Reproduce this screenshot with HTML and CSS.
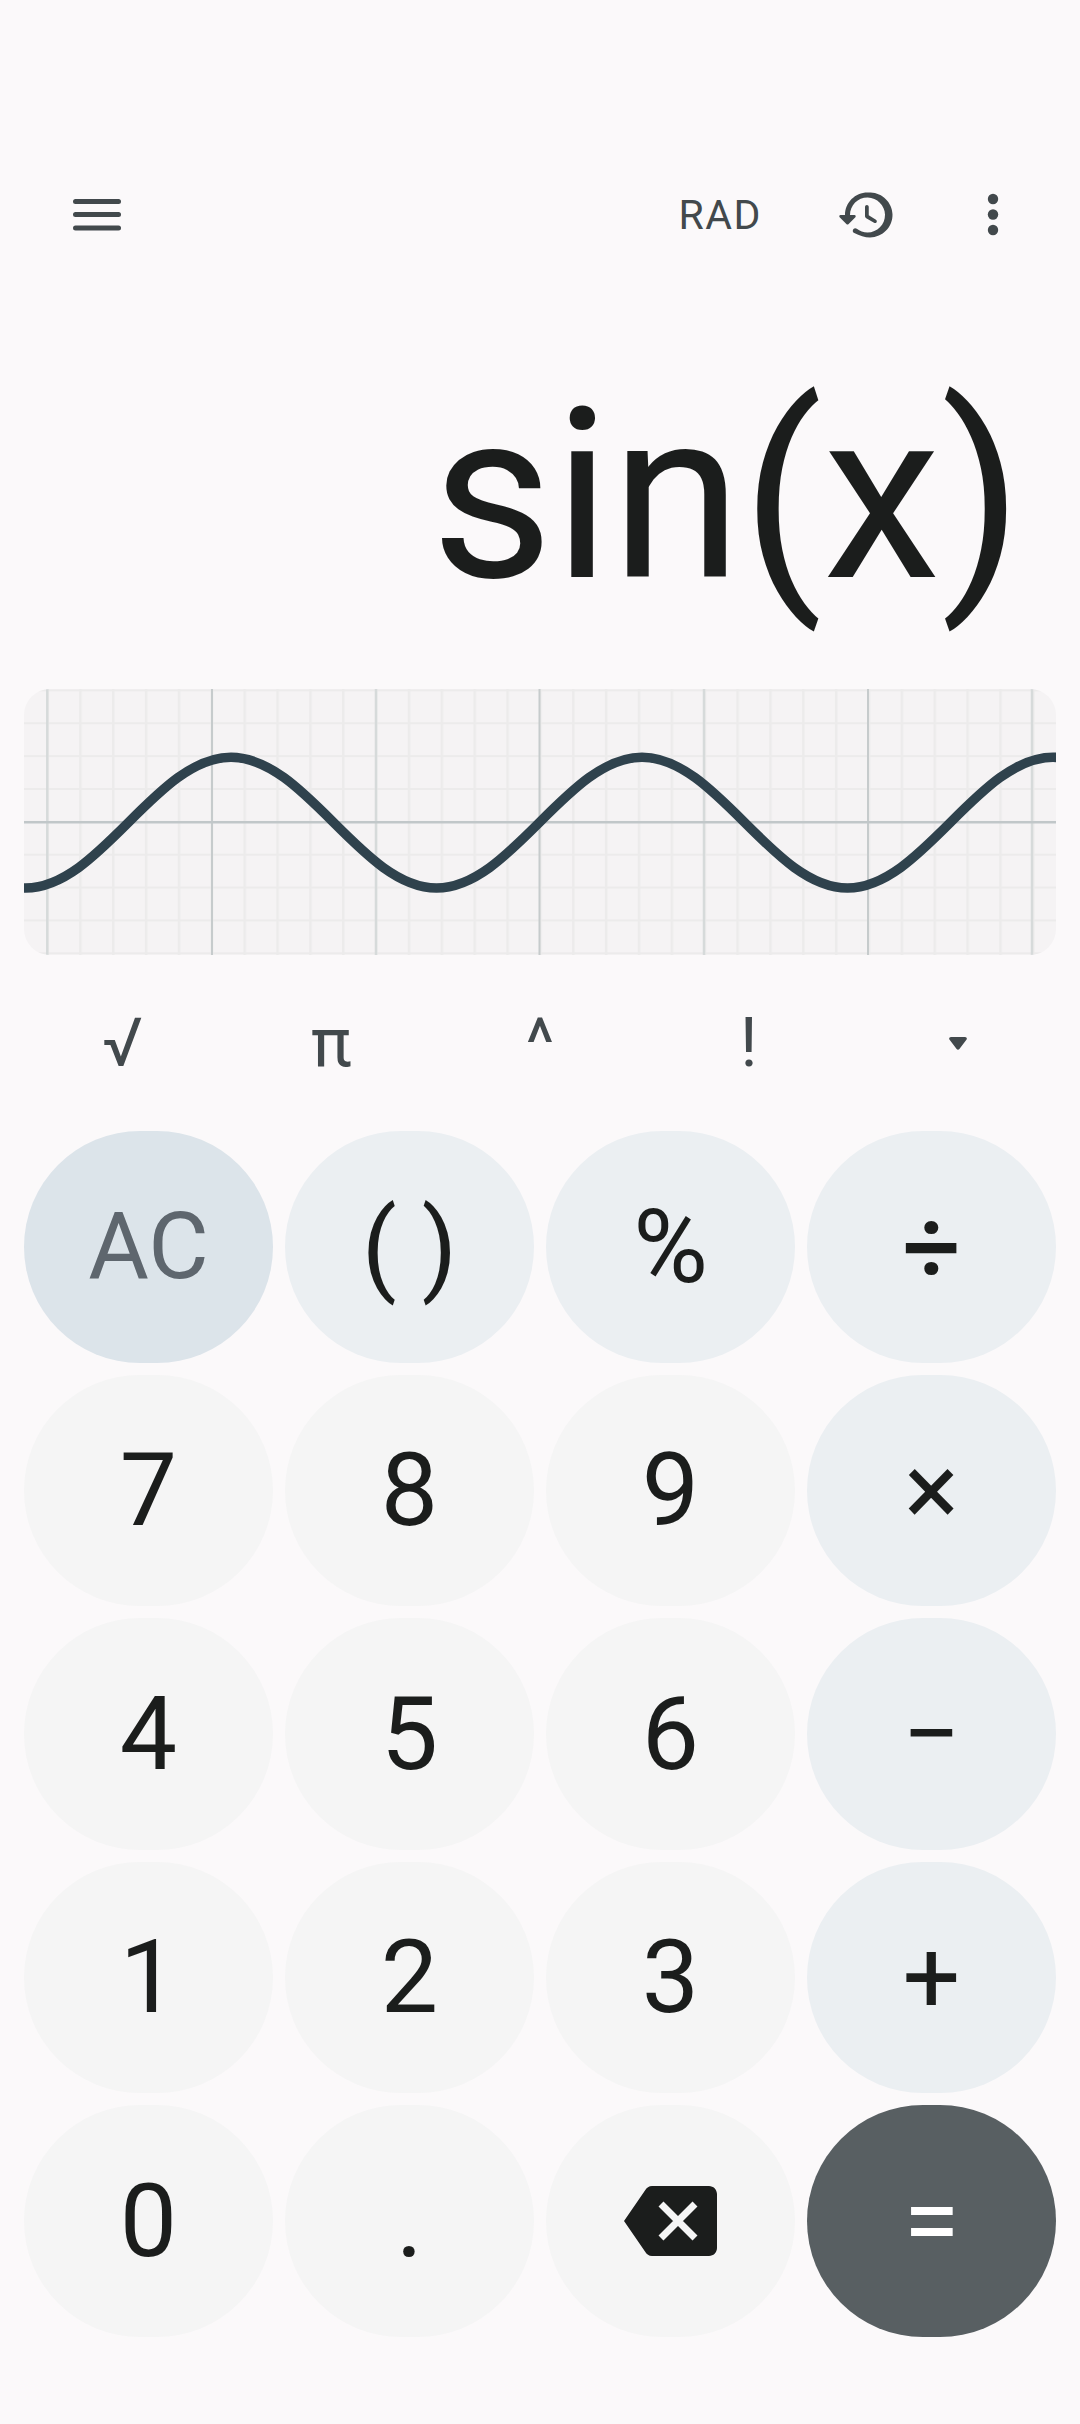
FILE: index.html
```html
<!DOCTYPE html>
<html lang="en">
<head>
  <meta charset="UTF-8" />
  <meta name="viewport" content="width=device-width, initial-scale=1.0" />
  <title>Calculator</title>
  <link rel="stylesheet" href="styles.css">
</head>
<body>
  <header class="topbar">
    <svg class="icon-menu" viewBox="0 0 48 32" aria-hidden="true">
      <rect x="0" y="0" width="48" height="5" rx="2.5"/>
      <rect x="0" y="13" width="48" height="5" rx="2.5"/>
      <rect x="0" y="26.5" width="48" height="5" rx="2.5"/>
    </svg>
    <div class="actions">
      <span class="rad">RAD</span>
      <svg class="icon-history" viewBox="0 0 24 24" aria-hidden="true">
        <path d="M13.26 3C8.17 2.86 4 6.95 4 12H2.21c-.45 0-.67.54-.35.85l2.79 2.8c.2.2.51.2.71 0l2.79-2.8c.31-.31.09-.85-.36-.85H6c0-3.9 3.18-7.05 7.1-7 3.7.05 6.85 3.2 6.9 6.9.05 3.91-3.1 7.1-7 7.1-1.61 0-3.1-.55-4.28-1.48-.4-.31-.96-.28-1.32.08-.42.43-.39 1.13.08 1.5C9.98 20.29 11.91 21 14 21c5.05 0 9.14-4.17 9-9.26-.13-4.69-4.05-8.61-8.74-8.74zM12.75 8c-.41 0-.75.34-.75.75v3.68c0 .35.19.68.49.86l3.12 1.85c.36.21.82.09 1.03-.26.21-.36.09-.82-.26-1.03l-2.88-1.71v-3.4c0-.4-.34-.74-.75-.74z"/>
      </svg>
      <svg class="icon-more" viewBox="0 0 12 44" aria-hidden="true">
        <circle cx="6" cy="6" r="5.2"/>
        <circle cx="6" cy="21.5" r="5.2"/>
        <circle cx="6" cy="37" r="5.2"/>
      </svg>
    </div>
  </header>

  <div class="display">sin(x)</div>

  <div class="graph">
    <svg viewBox="0 0 1032 266" aria-hidden="true">
      <defs>
        <pattern id="minor-grid" x="22.3" y="0.4" width="32.86" height="32.86" patternUnits="userSpaceOnUse">
          <rect x="0" y="0" width="2.5" height="32.86" fill="#ecebeb"/>
          <rect x="0" y="0" width="32.86" height="2" fill="#ecebeb"/>
        </pattern>
      </defs>
      <rect width="1032" height="266" fill="url(#minor-grid)"/>
      <g class="major">
        <line class="soft" x1="23.3" y1="0" x2="23.3" y2="266"/>
        <line x1="188" y1="0" x2="188" y2="266"/>
        <line class="soft" x1="352" y1="0" x2="352" y2="266"/>
        <line x1="515.5" y1="0" x2="515.5" y2="266"/>
        <line class="soft" x1="680" y1="0" x2="680" y2="266"/>
        <line x1="844" y1="0" x2="844" y2="266"/>
        <line class="soft" x1="1008" y1="0" x2="1008" y2="266"/>
        <line class="axis" x1="0" y1="133.3" x2="1032" y2="133.3"/>
      </g>
      <path class="curve" d="M-204 68.3C-129.2 68.3 -73.3 199 1.5 199c74.8 0 130.7 -130.7 205.5 -130.7s130.7 130.7 205.5 130.7s130.7 -130.7 205.5 -130.7s130.7 130.7 205.5 130.7s130.7 -130.7 205.5 -130.7s130.7 130.7 205.5 130.7"/>
    </svg>
  </div>

  <div class="advanced">
    <span>√</span>
    <span>π</span>
    <span>^</span>
    <span>!</span>
    <svg class="icon-expand" viewBox="0 0 18 13" aria-hidden="true">
      <path d="M2 0h14c1.6 0 2.4 1.7 1.4 2.8L10.4 12c-.7.9-2.1.9-2.8 0L.6 2.8C-.4 1.7.4 0 2 0z"/>
    </svg>
  </div>

  <div class="keypad">
    <button class="key clear">AC</button>
    <button class="key op">( )</button>
    <button class="key op">%</button>
    <button class="key op heavy">÷</button>

    <button class="key">7</button>
    <button class="key">8</button>
    <button class="key">9</button>
    <button class="key op">×</button>

    <button class="key">4</button>
    <button class="key">5</button>
    <button class="key">6</button>
    <button class="key op">−</button>

    <button class="key">1</button>
    <button class="key">2</button>
    <button class="key">3</button>
    <button class="key op">+</button>

    <button class="key">0</button>
    <button class="key">.</button>
    <button class="key">
      <svg class="icon-backspace" viewBox="0 0 93 70" aria-hidden="true">
        <path d="M21 4.5C22.7 1.700 25 0 28 0h57c4.400 0 8 3.600 8 8v54c0 4.400-3.600 8-8 8H28c-3 0-5.300-1.700-7-4.500L0 35z"/>
        <path class="cross" d="M37 18l34 34M71 18L37 52"/>
      </svg>
    </button>
    <button class="key equals">=</button>
  </div>
</body>
</html>
```

FILE: styles.css
```css
:root {
  --bg-main: #fbf9fa;
  --graph-bg: #f5f3f4;
  --icon: #42494c;
  --text-dark: #1b1d1c;
  --key-num: #f5f5f5;
  --key-op: #ebeff2;
  --key-clear: #dce4ea;
  --key-equals: #585f62;
}
* { box-sizing: border-box; margin: 0; padding: 0; }
body { width: 1080px; height: 2424px; overflow: hidden; background: var(--bg-main); color: var(--text-dark); font-family: Roboto, "Liberation Sans", sans-serif; }

.topbar { display: flex; align-items: center; height: 96px; margin-top: 167px; padding: 0 81px 0 73px; color: var(--icon); }
.topbar svg { display: block; fill: currentColor; }
.icon-menu { width: 48px; height: 32px; }
.actions { display: flex; align-items: center; margin-left: auto; }
.rad { font-size: 41px; line-height: 48px; letter-spacing: 1.500px; }
.icon-history { width: 60px; height: 60px; margin-left: 73px; }
.icon-more { width: 12px; height: 44px; margin-left: 92px; }

.display { height: 426px; padding: 20px 57px 0 0; text-align: right; font-size: 237px; line-height: 426px; color: var(--text-dark); white-space: nowrap; }

.graph { height: 266px; margin: 0 24px; background: var(--graph-bg); border-radius: 26px; overflow: hidden; }
.graph svg { display: block; width: 100%; height: 100%; }
.major line { stroke: #c6cbcc; stroke-width: 2; }
.major line.soft { stroke: #d6dada; stroke-width: 2.500px; }
.major line.axis { stroke: #c1c7c9; stroke-width: 2.500px; }
.curve { fill: none; stroke: #2f424d; stroke-width: 9.500px; }

.advanced { display: grid; grid-template-columns: repeat(5, 1fr); align-items: center; justify-items: center; height: 176px; padding: 0 18px; color: var(--icon); font-size: 68px; line-height: 80px; }
.icon-expand { width: 18px; height: 13px; fill: currentColor; }

.keypad { display: grid; grid-template-columns: repeat(4, 1fr); grid-auto-rows: 231.500px; gap: 12px; padding: 0 24px; }
.key { display: flex; align-items: center; justify-content: center; border: none; border-radius: 116px; background: var(--key-num); color: var(--text-dark); font-family: inherit; font-size: 102px; line-height: 1; }
.key.op { background: var(--key-op); }
.key.heavy { font-weight: 500; }
.key.clear { background: var(--key-clear); color: #5e666e; font-size: 93px; }
.key.equals { background: var(--key-equals); color: #fff; }
.icon-backspace { display: block; width: 93px; height: 70px; fill: var(--text-dark); }
.icon-backspace .cross { fill: none; stroke: var(--key-num); stroke-width: 7; }
```
